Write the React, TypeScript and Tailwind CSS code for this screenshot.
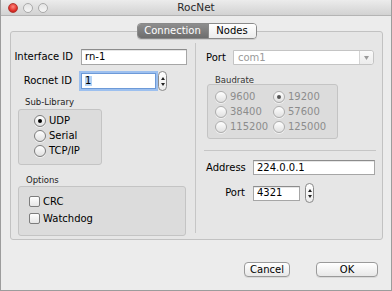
import React from "react";

const Radio = ({ checked = false, disabled = false }: { checked?: boolean; disabled?: boolean }) => (
  <span
    className={
      "w-[12px] h-[12px] shrink-0 rounded-full border flex items-center justify-center bg-gradient-to-b from-white to-[#e0e0e0] shadow-[0_1px_0_rgba(255,255,255,0.6)] " +
      (disabled ? "border-[#adadad]" : "border-[#7d7d7d]")
    }
  >
    {checked && <span className={"w-[4px] h-[4px] rounded-full " + (disabled ? "bg-[#555]" : "bg-black")} />}
  </span>
);

const Check = () => (
  <span className="w-[11px] h-[11px] shrink-0 rounded-[2px] border border-[#7d7d7d] bg-gradient-to-b from-white to-[#e6e6e6]" />
);

const Spinner = () => (
  <span className="w-[9px] h-[20px] shrink-0 rounded-full border border-[#8a8a8a] bg-gradient-to-b from-white to-[#ececec] flex flex-col items-center justify-center gap-[3px]">
    <svg width="4" height="3" viewBox="0 0 4 3">
      <path d="M2 0 L4 3 L0 3 Z" fill="#222" />
    </svg>
    <svg width="4" height="3" viewBox="0 0 4 3">
      <path d="M0 0 L4 0 L2 3 Z" fill="#222" />
    </svg>
  </span>
);

const Input = ({ w, children, focus = false }: { w: string; children?: React.ReactNode; focus?: boolean }) => (
  <div
    className={
      w +
      " h-[16px] bg-white border flex items-center pl-[3px] text-black " +
      (focus
        ? "border-[#6d9ad8] shadow-[0_0_0_2px_#9dc0ef]"
        : "border-[#a6a6a6] border-t-[#8c8c8c] shadow-[inset_0_1px_0_#e6e6e6]")
    }
  >
    {children}
  </div>
);

export default function App() {
  return (
    <div className="w-[392px] h-[291px] overflow-hidden bg-[#ececec] border-x border-b border-[#9c9c9c] flex flex-col font-['DejaVu_Sans',sans-serif] text-[10px] text-black leading-none">
      {/* Title bar */}
      <div className="relative h-[16px] shrink-0 bg-gradient-to-b from-[#ececec] to-[#d2d2d2] border-b border-[#b4b4b4] flex items-center">
        <div className="flex items-center gap-[5px] pl-[7px]">
          <span className="w-[10px] h-[10px] rounded-full bg-[radial-gradient(circle_at_50%_35%,#ff8a80,#e0302a_60%,#a8140f)] border border-[#b23a33]" />
          <span className="w-[10px] h-[10px] rounded-full bg-gradient-to-b from-[#e4e4e4] to-[#f6f6f6] border border-[#aaaaaa]" />
          <span className="w-[10px] h-[10px] rounded-full bg-gradient-to-b from-[#e4e4e4] to-[#f6f6f6] border border-[#aaaaaa]" />
        </div>
        <div className="absolute inset-0 flex items-center justify-center text-[10.5px] text-[#2a2a2a]">RocNet</div>
      </div>

      {/* Tab box */}
      <div className="ml-[9px] mt-[15px] w-[373px] h-[209px] shrink-0 rounded-[3px] border border-[#c2c2c2] bg-[#e6e6e6] flex flex-col">
        <div className="-mt-[9px] h-[16px] flex justify-center">
          <div className="flex h-[16px] rounded-[4px] border border-[#8a8a8a] overflow-hidden shadow-[0_1px_0_rgba(0,0,0,0.1)]">
            <div className="w-[70px] flex items-center justify-center bg-gradient-to-b from-[#8e8e8e] to-[#6d6d6d] text-white">
              Connection
            </div>
            <div className="w-[48px] flex items-center justify-center bg-gradient-to-b from-white to-[#ececec] border-l border-[#8a8a8a]">
              Nodes
            </div>
          </div>
        </div>

        <div className="flex flex-1">
          {/* Left column */}
          <div className="w-[184px] flex flex-col">
            <div className="mt-[10px] flex items-center">
              <div className="w-[62px] text-right">Interface ID</div>
              <div className="ml-[8px]">
                <Input w="w-[106px]">rn-1</Input>
              </div>
            </div>
            <div className="mt-[6px] flex items-center">
              <div className="w-[61px] text-right">Rocnet ID</div>
              <div className="ml-[9px]">
                <Input w="w-[75px]" focus>
                  <span className="bg-[#b5d3f5] pr-[1px]">1</span>
                </Input>
              </div>
              <div className="ml-[2px]">
                <Spinner />
              </div>
            </div>

            <div className="mt-[6px] pl-[14px] text-[8.5px] h-[11px] flex items-center text-[#222]">Sub-Library</div>
            <div className="ml-[7px] mt-[1px] w-[84px] h-[56px] rounded-[3px] border border-[#c4c4c4] bg-[#dcdcdc] pt-[3px] pl-[15px] flex flex-col">
              <div className="h-[15px] flex items-center gap-[3px]">
                <Radio checked />
                <span>UDP</span>
              </div>
              <div className="h-[15px] flex items-center gap-[3px]">
                <Radio />
                <span>Serial</span>
              </div>
              <div className="h-[15px] flex items-center gap-[3px]">
                <Radio />
                <span>TCP/IP</span>
              </div>
            </div>

            <div className="mt-[10px] pl-[15px] text-[8.5px] h-[11px] flex items-center text-[#222]">Options</div>
            <div className="ml-[7px] mt-[0px] w-[168px] h-[50px] rounded-[3px] border border-[#c4c4c4] bg-[#dcdcdc] pt-[6px] pl-[10px] flex flex-col">
              <div className="h-[17px] flex items-center gap-[3px]">
                <Check />
                <span>CRC</span>
              </div>
              <div className="h-[17px] flex items-center gap-[3px]">
                <Check />
                <span>Watchdog</span>
              </div>
            </div>
          </div>

          {/* Divider */}
          <div className="w-px bg-[#c6c6c6] mt-[4px] mb-[6px]" />

          {/* Right column */}
          <div className="flex-1 flex flex-col">
            <div className="mt-[11px] flex items-center pl-[10px]">
              <div className="w-[27px]">Port</div>
              <div className="w-[141px] h-[15px] bg-white border border-[#c4c4c4] rounded-r-[3px] flex items-center">
                <span className="flex-1 pl-[4px] text-[#9a9a9a]">com1</span>
                <span className="w-[14px] h-full border-l border-[#d4d4d4] rounded-r-[3px] bg-gradient-to-b from-[#fafafa] to-[#ececec] flex items-center justify-center">
                  <svg width="5" height="4" viewBox="0 0 5 4">
                    <path d="M0 0 L5 0 L2.5 4 Z" fill="#9a9a9a" />
                  </svg>
                </span>
              </div>
            </div>

            <div className="mt-[10px] pl-[19px] text-[8.5px] h-[11px] flex items-center text-[#333]">Baudrate</div>
            <div className="ml-[11px] mt-[-2px] w-[131px] h-[55px] rounded-[3px] border border-[#c4c4c4] bg-[#dcdcdc] pt-[4px] pl-[7px] grid grid-cols-[58px_1fr] auto-rows-[15px] text-[#8c8c8c]">
              <div className="flex items-center gap-[3px]">
                <Radio disabled />
                <span>9600</span>
              </div>
              <div className="flex items-center gap-[3px]">
                <Radio disabled checked />
                <span>19200</span>
              </div>
              <div className="flex items-center gap-[3px]">
                <Radio disabled />
                <span>38400</span>
              </div>
              <div className="flex items-center gap-[3px]">
                <Radio disabled />
                <span>57600</span>
              </div>
              <div className="flex items-center gap-[3px]">
                <Radio disabled />
                <span>115200</span>
              </div>
              <div className="flex items-center gap-[3px]">
                <Radio disabled />
                <span>125000</span>
              </div>
            </div>

            <div className="mt-[11px] ml-[8px] w-[172px] h-px bg-[#c6c6c6]" />

            <div className="mt-[9px] flex items-center pl-[10px]">
              <div className="w-[39px] text-right">Address</div>
              <div className="ml-[8px]">
                <Input w="w-[122px] !h-[15px]">224.0.0.1</Input>
              </div>
            </div>
            <div className="mt-[8px] flex items-center pl-[10px]">
              <div className="w-[39px] text-right">Port</div>
              <div className="ml-[8px]">
                <Input w="w-[47px] !h-[15px]">4321</Input>
              </div>
              <div className="ml-[5px]">
                <Spinner />
              </div>
            </div>
          </div>
        </div>
      </div>

      {/* Buttons */}
      <div className="mt-[22px] flex justify-end pr-[13px] gap-[26px]">
        <button className="w-[46px] h-[15px] rounded-[4px] border border-[#9a9a9a] bg-gradient-to-b from-white to-[#e8e8e8] shadow-[0_1px_0_rgba(0,0,0,0.08)] flex items-center justify-center">
          Cancel
        </button>
        <button className="w-[62px] h-[15px] rounded-[4px] border border-[#9a9a9a] bg-gradient-to-b from-white to-[#e8e8e8] shadow-[0_1px_0_rgba(0,0,0,0.08)] flex items-center justify-center">
          OK
        </button>
      </div>
    </div>
  );
}
